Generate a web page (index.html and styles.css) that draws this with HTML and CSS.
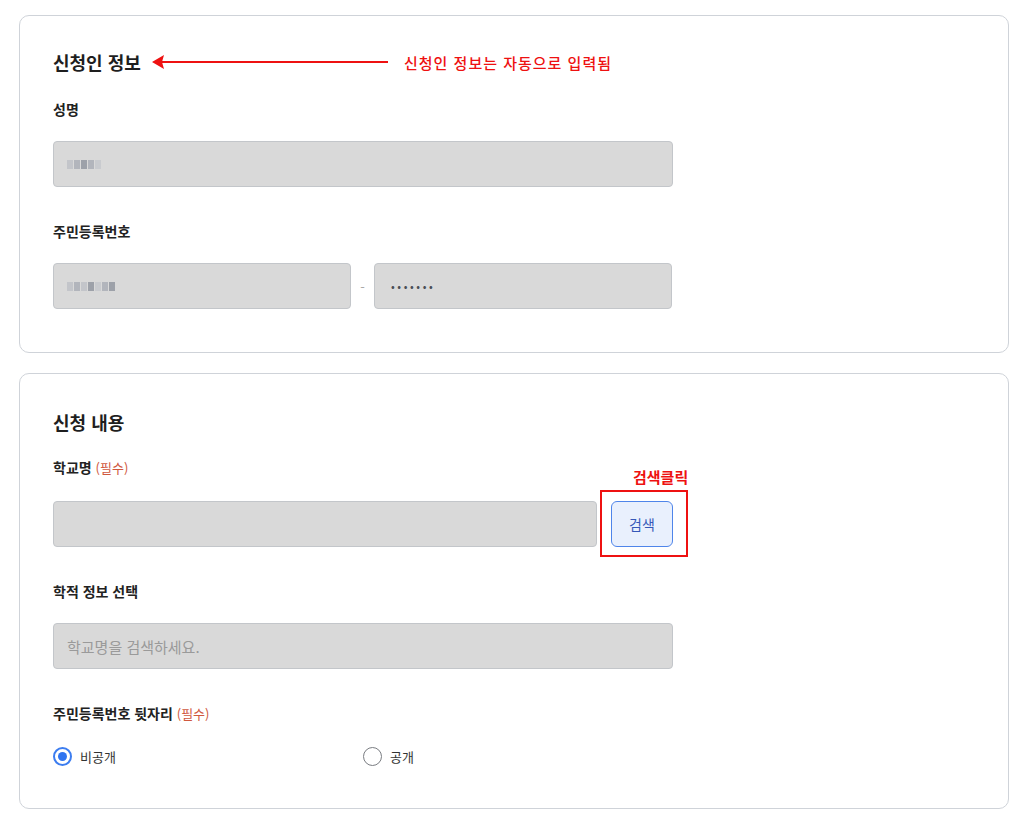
FILE: index.html
```html
<!DOCTYPE html>
<html lang="ko">
<head>
<meta charset="utf-8">
<title>신청</title>
<link rel="stylesheet" href="styles.css">
</head>
<body>
<div class="page">
  <section class="card card-a">
    <h2 class="title">신청인 정보</h2>
    <div class="label l-first">성명</div>
    <div class="input wide"><span class="blur"><i class="b1"></i><i class="b2"></i><i class="b3"></i><i class="b2"></i><i class="b4"></i></span></div>
    <div class="label l-gap">주민등록번호</div>
    <div class="row-ssn">
      <div class="input half"><span class="blur"><i class="b1"></i><i class="b2"></i><i class="b1"></i><i class="b3"></i><i class="b4"></i><i class="b2"></i><i class="b3"></i></span></div>
      <span class="dash">-</span>
      <div class="input half"><span class="dots">•••••••</span></div>
    </div>
    <div class="note-arrow">
      <svg width="240" height="14" viewBox="0 0 240 14"><line x1="10" y1="7" x2="236" y2="7" stroke="#ee1111" stroke-width="2.2"/><polygon points="0,7 12,0 10,7 12,14" fill="#ee1111"/></svg>
    </div>
    <div class="note-text">신청인 정보는 자동으로 입력됨</div>
  </section>

  <section class="card card-b">
    <h2 class="title">신청 내용</h2>
    <div class="label l-first2">학교명 <span class="req">(필수)</span></div>
    <div class="row-search">
      <div class="input school"></div>
      <button class="btn">검색</button>
    </div>
    <div class="label l-gap">학적 정보 선택</div>
    <div class="input wide"><span class="ph">학교명을 검색하세요.</span></div>
    <div class="label l-gap">주민등록번호 뒷자리 <span class="req">(필수)</span></div>
    <div class="radios">
      <label class="radio"><span class="dot on"></span>비공개</label>
      <label class="radio"><span class="dot"></span>공개</label>
    </div>
    <div class="click-box"></div>
    <div class="click-text">검색클릭</div>
  </section>
</div>
</body>
</html>
```

FILE: styles.css
```css
* { box-sizing: border-box; }
html, body { margin: 0; padding: 0; background: #ffffff; }
body {
  font-family: "Noto Sans CJK KR", "Noto Sans", sans-serif;
  color: #222222;
}
.page {
  padding: 15px 0 0 19px;
  display: flex;
  flex-direction: column;
  gap: 20px;
}
.card {
  position: relative;
  width: 990px;
  border: 1px solid #cfd3d9;
  border-radius: 10px;
  padding-left: 33px;
  padding-right: 34px;
}
.card-a { padding-top: 33px; padding-bottom: 43px; }
.card-b { padding-top: 35px; padding-bottom: 42px; }
.title {
  margin: 0;
  font-size: 18px;
  line-height: 26px;
  font-weight: 700;
  color: #1e1e1e;
}
.label {
  font-size: 14px;
  line-height: 20px;
  font-weight: 700;
  color: #222;
  margin-bottom: 22px;
}
.l-first { margin-top: 24px; }
.l-first2 { margin-top: 22px; margin-bottom: 23px; }
.l-gap { margin-top: 34px; }
.req {
  font-weight: 400;
  font-size: 13px;
  color: #d0583e;
}
.input {
  height: 46px;
  background: #d9d9d9;
  border: 1px solid #c3c6ca;
  border-radius: 4px;
  display: flex;
  align-items: center;
  padding-left: 13px;
}
.wide { width: 620px; }
.half { width: 298px; }
.school { width: 544px; }
.row-ssn { display: flex; align-items: center; }
.dash {
  width: 23px;
  text-align: center;
  color: #a8a8a8;
  font-size: 13px;
}
.dots {
  font-size: 11px;
  letter-spacing: 2.6px;
  color: #4a4f57;
  padding-left: 3px;
}
.blur { display: flex; gap: 1px; height: 9px; }
.blur i { display: block; width: 6px; height: 9px; }
.b1 { background: #c3c5ca; }
.b2 { background: #b2b5bc; }
.b3 { background: #9da1a9; }
.b4 { background: #c9cbcf; }
.row-search { display: flex; align-items: center; gap: 14px; }
.btn {
  width: 62px;
  height: 46px;
  background: #e9f0fd;
  border: 1px solid #4f85ea;
  border-radius: 6px;
  color: #3558b8;
  font-family: inherit;
  font-size: 14px;
  padding: 0;
}
.ph { font-size: 15px; color: #9a9a9a; }
.radios {
  display: flex;
  height: 20px;
  align-items: center;
}
.radio {
  display: flex;
  align-items: center;
  gap: 8px;
  font-size: 13px;
  color: #333;
  width: 310px;
}
.dot {
  width: 19px;
  height: 19px;
  border-radius: 50%;
  border: 1.5px solid #7a7d82;
  display: inline-flex;
  align-items: center;
  justify-content: center;
}
.dot.on { border: 2px solid #3c7df0; }
.dot.on::after {
  content: "";
  width: 9px;
  height: 9px;
  border-radius: 50%;
  background: #2f74f0;
}
.note-arrow {
  position: absolute;
  left: 132px;
  top: 39px;
  line-height: 0;
}
.note-text {
  position: absolute;
  left: 384px;
  top: 36px;
  font-size: 15px;
  line-height: 22px;
  font-weight: 500;
  letter-spacing: 1px;
  color: #ee1111;
}
.click-box {
  position: absolute;
  left: 580px;
  top: 116px;
  width: 88px;
  height: 67px;
  border: 2.5px solid #ee1111;
}
.click-text {
  position: absolute;
  left: 613px;
  top: 92px;
  font-size: 15px;
  line-height: 22px;
  font-weight: 700;
  color: #ee1111;
}
```
